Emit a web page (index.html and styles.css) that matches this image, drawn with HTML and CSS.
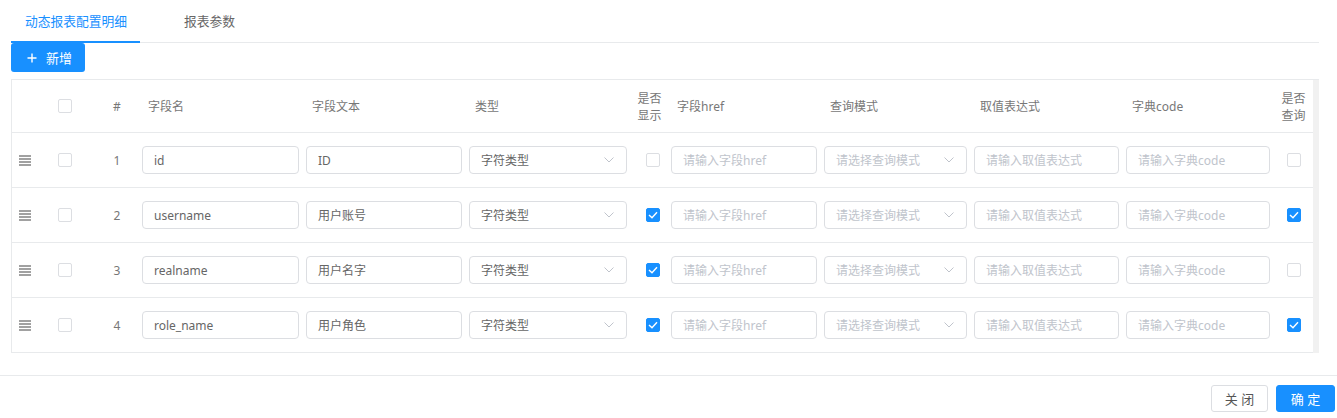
FILE: index.html
```html
<!DOCTYPE html>
<html lang="zh">
<head>
<meta charset="utf-8">
<title>动态报表配置</title>
<link rel="stylesheet" href="styles.css">
</head>
<body>
<div class="page">
  <div class="tabs">
    <div class="tab active">动态报表配置明细</div>
    <div class="tab">报表参数</div>
  </div>
  <button class="btn-add"><svg class="plus" width="10" height="10" viewBox="0 0 10 10"><path d="M5 0.5V9.5M0.5 5H9.5" stroke="#fff" stroke-width="1.4"/></svg>新增</button>

  <div class="table-wrap">
    <div class="table">
      <div class="row head">
        <div class="cell c-drag"></div>
        <div class="cell c-center"><span class="chk"></span></div>
        <div class="cell c-center c-num">#</div>
        <div class="cell c-label">字段名</div>
        <div class="cell c-label">字段文本</div>
        <div class="cell c-label">类型</div>
        <div class="cell c-center c-two">是否<br>显示</div>
        <div class="cell c-label">字段href</div>
        <div class="cell c-label">查询模式</div>
        <div class="cell c-label">取值表达式</div>
        <div class="cell c-label">字典code</div>
        <div class="cell c-center c-two">是否<br>查询</div>
      </div>

      <div class="row">
        <div class="cell c-center"><svg class="drag" width="14" height="11" viewBox="0 0 14 11"><path d="M1 1H13M1 4H13M1 7H13M1 10H13" stroke="#444" stroke-width="1.2"/></svg></div>
        <div class="cell c-center"><span class="chk"></span></div>
        <div class="cell c-center c-num">1</div>
        <div class="cell"><div class="inp">id</div></div>
        <div class="cell"><div class="inp">ID</div></div>
        <div class="cell"><div class="inp sel">字符类型<svg class="arrow" width="10" height="6" viewBox="0 0 10 6"><path d="M0.5 0.5L5 5L9.5 0.5" fill="none" stroke="#c0c4cc"/></svg></div></div>
        <div class="cell c-center c-show"><span class="chk"></span></div>
        <div class="cell"><div class="inp ph">请输入字段href</div></div>
        <div class="cell"><div class="inp sel ph">请选择查询模式<svg class="arrow" width="10" height="6" viewBox="0 0 10 6"><path d="M0.5 0.5L5 5L9.5 0.5" fill="none" stroke="#c0c4cc"/></svg></div></div>
        <div class="cell"><div class="inp ph">请输入取值表达式</div></div>
        <div class="cell"><div class="inp ph">请输入字典code</div></div>
        <div class="cell c-center"><span class="chk"></span></div>
      </div>

      <div class="row">
        <div class="cell c-center"><svg class="drag" width="14" height="11" viewBox="0 0 14 11"><path d="M1 1H13M1 4H13M1 7H13M1 10H13" stroke="#444" stroke-width="1.2"/></svg></div>
        <div class="cell c-center"><span class="chk"></span></div>
        <div class="cell c-center c-num">2</div>
        <div class="cell"><div class="inp">username</div></div>
        <div class="cell"><div class="inp">用户账号</div></div>
        <div class="cell"><div class="inp sel">字符类型<svg class="arrow" width="10" height="6" viewBox="0 0 10 6"><path d="M0.5 0.5L5 5L9.5 0.5" fill="none" stroke="#c0c4cc"/></svg></div></div>
        <div class="cell c-center c-show"><span class="chk on"><svg width="10" height="8" viewBox="0 0 10 8"><path d="M1 4L4 6.8L9 1.2" fill="none" stroke="#fff" stroke-width="1.4"/></svg></span></div>
        <div class="cell"><div class="inp ph">请输入字段href</div></div>
        <div class="cell"><div class="inp sel ph">请选择查询模式<svg class="arrow" width="10" height="6" viewBox="0 0 10 6"><path d="M0.5 0.5L5 5L9.5 0.5" fill="none" stroke="#c0c4cc"/></svg></div></div>
        <div class="cell"><div class="inp ph">请输入取值表达式</div></div>
        <div class="cell"><div class="inp ph">请输入字典code</div></div>
        <div class="cell c-center"><span class="chk on"><svg width="10" height="8" viewBox="0 0 10 8"><path d="M1 4L4 6.8L9 1.2" fill="none" stroke="#fff" stroke-width="1.4"/></svg></span></div>
      </div>

      <div class="row">
        <div class="cell c-center"><svg class="drag" width="14" height="11" viewBox="0 0 14 11"><path d="M1 1H13M1 4H13M1 7H13M1 10H13" stroke="#444" stroke-width="1.2"/></svg></div>
        <div class="cell c-center"><span class="chk"></span></div>
        <div class="cell c-center c-num">3</div>
        <div class="cell"><div class="inp">realname</div></div>
        <div class="cell"><div class="inp">用户名字</div></div>
        <div class="cell"><div class="inp sel">字符类型<svg class="arrow" width="10" height="6" viewBox="0 0 10 6"><path d="M0.5 0.5L5 5L9.5 0.5" fill="none" stroke="#c0c4cc"/></svg></div></div>
        <div class="cell c-center c-show"><span class="chk on"><svg width="10" height="8" viewBox="0 0 10 8"><path d="M1 4L4 6.8L9 1.2" fill="none" stroke="#fff" stroke-width="1.4"/></svg></span></div>
        <div class="cell"><div class="inp ph">请输入字段href</div></div>
        <div class="cell"><div class="inp sel ph">请选择查询模式<svg class="arrow" width="10" height="6" viewBox="0 0 10 6"><path d="M0.5 0.5L5 5L9.5 0.5" fill="none" stroke="#c0c4cc"/></svg></div></div>
        <div class="cell"><div class="inp ph">请输入取值表达式</div></div>
        <div class="cell"><div class="inp ph">请输入字典code</div></div>
        <div class="cell c-center"><span class="chk"></span></div>
      </div>

      <div class="row">
        <div class="cell c-center"><svg class="drag" width="14" height="11" viewBox="0 0 14 11"><path d="M1 1H13M1 4H13M1 7H13M1 10H13" stroke="#444" stroke-width="1.2"/></svg></div>
        <div class="cell c-center"><span class="chk"></span></div>
        <div class="cell c-center c-num">4</div>
        <div class="cell"><div class="inp">role_name</div></div>
        <div class="cell"><div class="inp">用户角色</div></div>
        <div class="cell"><div class="inp sel">字符类型<svg class="arrow" width="10" height="6" viewBox="0 0 10 6"><path d="M0.5 0.5L5 5L9.5 0.5" fill="none" stroke="#c0c4cc"/></svg></div></div>
        <div class="cell c-center c-show"><span class="chk on"><svg width="10" height="8" viewBox="0 0 10 8"><path d="M1 4L4 6.8L9 1.2" fill="none" stroke="#fff" stroke-width="1.4"/></svg></span></div>
        <div class="cell"><div class="inp ph">请输入字段href</div></div>
        <div class="cell"><div class="inp sel ph">请选择查询模式<svg class="arrow" width="10" height="6" viewBox="0 0 10 6"><path d="M0.5 0.5L5 5L9.5 0.5" fill="none" stroke="#c0c4cc"/></svg></div></div>
        <div class="cell"><div class="inp ph">请输入取值表达式</div></div>
        <div class="cell"><div class="inp ph">请输入字典code</div></div>
        <div class="cell c-center"><span class="chk on"><svg width="10" height="8" viewBox="0 0 10 8"><path d="M1 4L4 6.8L9 1.2" fill="none" stroke="#fff" stroke-width="1.4"/></svg></span></div>
      </div>
    </div>
    <div class="vscroll"></div>
  </div>
</div>
<div class="footer">
  <button class="btn">关 闭</button>
  <button class="btn primary">确 定</button>
</div>
</body>
</html>
```

FILE: styles.css
```css
* { box-sizing: border-box; }
html, body { margin: 0; padding: 0; background: #fff; }
body {
  font-family: "Noto Sans", "Noto Sans CJK SC", sans-serif;
  font-size: 12px;
  color: #666;
}
.page {
  padding: 0 18px 0 11px;
}
.tabs {
  display: flex;
  height: 43px;
  border-bottom: 1px solid #e8eaec;
}
.tab {
  display: flex;
  align-items: center;
  padding: 0 13px 0 14px;
  font-size: 12.75px;
  color: #666;
  white-space: nowrap;
  margin-bottom: -1px;
  border-bottom: 2px solid transparent;
}
.tab.active {
  color: #1890ff;
  border-bottom-color: #1890ff;
}
.tab + .tab { margin-left: 30px; }

.btn-add {
  display: flex;
  align-items: center;
  width: 74px;
  height: 29px;
  padding: 0 0 0 16px;
  border: none;
  border-radius: 3px;
  background: #1890ff;
  color: #fff;
  font-family: inherit;
  font-size: 13px;
}
.btn-add .plus { margin-right: 9px; }

.table-wrap {
  display: flex;
  margin-top: 7px;
  border-top: 1px solid #e8eaec;
}
.table {
  width: 1302px;
  border-left: 1px solid #e8eaec;
  border-bottom: 1px solid #e8eaec;
}
.vscroll {
  width: 6px;
  background: #f1f1f1;
}
.row {
  display: grid;
  grid-template-columns: 26px 54px 47px 164px 163px 165px 37px 153px 150px 152px 151px 39px;
  height: 55px;
  border-bottom: 1px solid #e8eaec;
}
.row:last-child { border-bottom: none; height: 54px; }
.row.head {
  height: 53px;
  color: #777;
}
.cell {
  display: flex;
  align-items: center;
  padding: 0 4px 0 3px;
  min-width: 0;
}
.c-center { justify-content: center; padding: 0; }
.c-num { color: #777; padding-left: 3px; }
.c-label { padding-left: 9px; }
.c-two { line-height: 17px; text-align: center; }
.c-show .chk { margin-left: 6px; }
.head .c-two { padding-top: 1px; }

.chk {
  display: inline-flex;
  align-items: center;
  justify-content: center;
  width: 14px;
  height: 14px;
  border: 1px solid #dcdee2;
  border-radius: 2px;
  background: #fff;
}
.chk.on {
  background: #1890ff;
  border-color: #1890ff;
}
.drag { display: block; }

.inp {
  display: flex;
  align-items: center;
  width: 100%;
  height: 28px;
  padding: 0 10px 0 11px;
  border: 1px solid #dcdee2;
  border-radius: 4px;
  color: #666;
  white-space: nowrap;
  overflow: hidden;
}
.inp.ph { color: #c0c4cc; }
.inp.sel { justify-content: space-between; padding-right: 12px; }
.arrow { flex: none; }

.footer {
  margin-top: 22px;
  border-top: 1px solid #e8eaec;
  display: flex;
  justify-content: flex-end;
  gap: 8px;
  padding: 9px 2px 0 0;
}
.btn {
  height: 27px;
  width: 57px;
  border: 1px solid #dcdee2;
  border-radius: 3px;
  background: #fff;
  color: #555;
  font-family: inherit;
  font-size: 13px;
  padding: 0;
}
.btn.primary {
  width: 59px;
  background: #1890ff;
  border-color: #1890ff;
  color: #fff;
}
```
